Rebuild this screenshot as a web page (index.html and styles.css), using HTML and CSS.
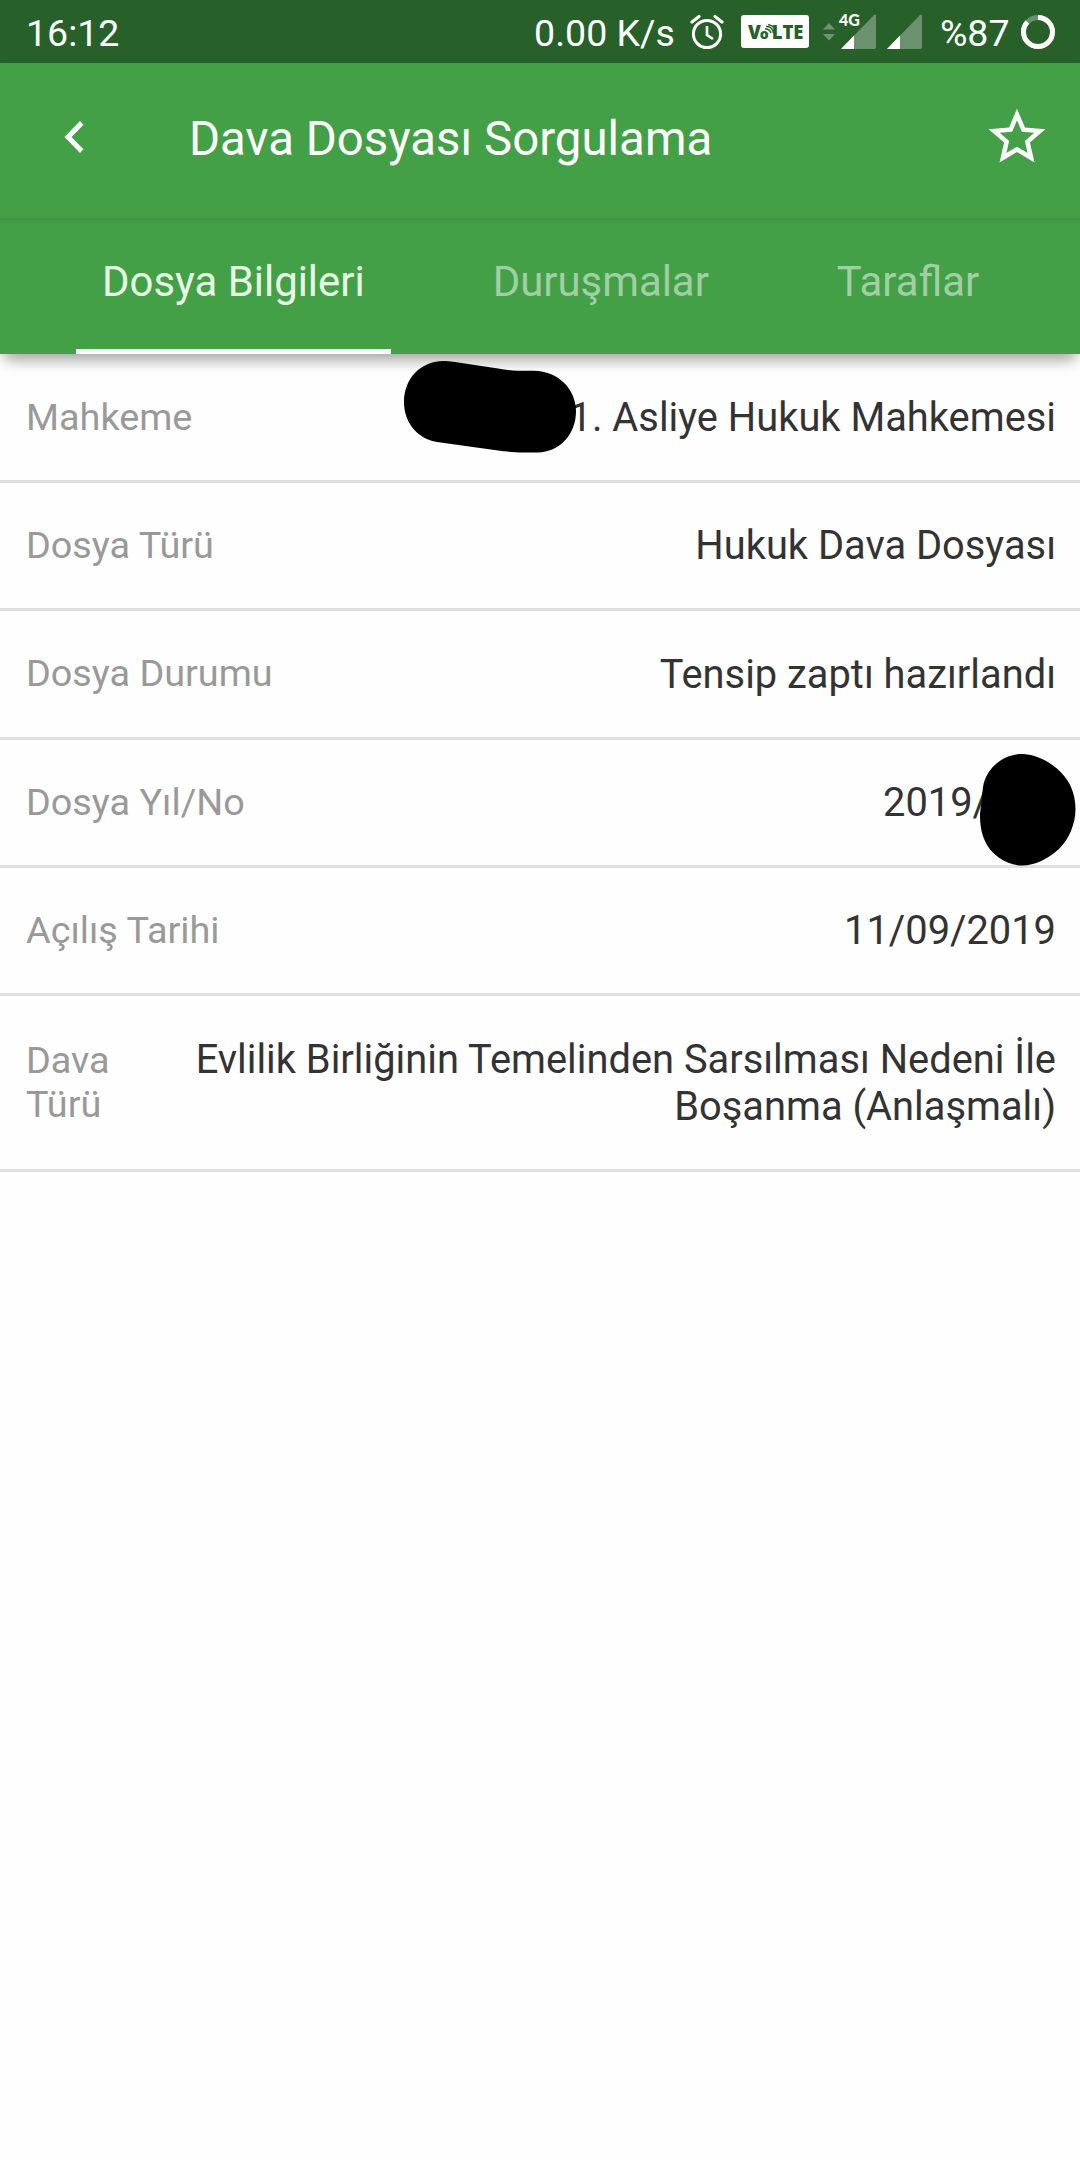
FILE: index.html
```html
<!DOCTYPE html>
<html lang="tr">
<head>
    <meta charset="UTF-8">
    <meta name="viewport" content="width=device-width, initial-scale=1.0">
    <title>Dava Dosyası Sorgulama</title>
    <link rel="stylesheet" href="styles.css">
</head>
<body>
    <div class="status-bar">
        <span class="clock">16:12</span>
        <div class="status-icons">
            <span class="speed">0.00 K/s</span>
            <svg class="alarm" width="34" height="36" viewBox="0 0 34 36" fill="none" stroke="#fff">
                <circle cx="17" cy="20" r="13.6" stroke-width="3"/>
                <path d="M17 12v9l6 4" stroke-width="2.6"/>
                <path d="M2 8l7-5.500M32 8l-7-5.500" stroke-width="3.200" stroke-linecap="round"/>
            </svg>
            <span class="volte">V<span class="volte-o">o<svg width="11" height="11" viewBox="0 0 11 11" fill="none" stroke="#28602a" stroke-width="1.500"><path d="M1 2.500Q7 2 8.500 9M3 .8Q9.500 1.500 10.300 7M0 5Q4.500 4.500 6 9"/></svg></span>LTE</span>
            <div class="signal signal-data">
                <svg width="12" height="18" viewBox="0 0 12 18" class="arrows">
                    <path d="M0 6.500L6 0l6 6.500zM0 11h12l-6 6.500z" fill="#6f9470"/>
                </svg>
                <span class="network">4G</span>
                <svg width="35" height="35" viewBox="0 0 35 35">
                    <path d="M0 35L33 1q2-1.500 2 1v31q0 2-2 2z" fill="#6b926c"/>
                    <path d="M0 35l13-13.500V35z" fill="#fff"/>
                </svg>
            </div>
            <svg class="signal-second" width="35" height="35" viewBox="0 0 35 35">
                <path d="M0 35L33 1q2-1.500 2 1v31q0 2-2 2z" fill="#6b926c"/>
                <path d="M0 35l13-13.500V35z" fill="#fff"/>
            </svg>
            <span class="battery">%87</span>
            <svg class="ring" width="34" height="34" viewBox="0 0 34 34" fill="none" stroke-width="5">
                <circle cx="17" cy="17" r="14.500" stroke="#6b926c"/>
                <circle cx="17" cy="17" r="14.500" stroke="#fff" pathLength="100" stroke-dasharray="87 13" transform="rotate(-90 17 17)"/>
            </svg>
        </div>
    </div>

    <header class="header">
        <div class="toolbar">
            <a href="#" class="back" title="Geri">
                <svg width="20" height="32" viewBox="0 0 20 32">
                    <path d="M16 0l3.500 3.800L7.500 16l12 12.200L16 32 .5 16z" fill="#fff"/>
                </svg>
            </a>
            <h1>Dava Dosyası Sorgulama</h1>
            <a href="#" class="favorite" title="Favori">
                <svg width="68" height="68" viewBox="0 0 24 24">
                    <path d="M22 9.240l-7.190-.62L12 2 9.190 8.630 2 9.240l5.460 4.730L5.820 21 12 17.270 18.180 21l-1.630-7.030L22 9.240zM12 15.400l-3.760 2.270 1-4.280-3.320-2.880 4.380-.38L12 6.100l1.710 4.040 4.380.38-3.320 2.880 1 4.280L12 15.400z" fill="#fff"/>
                </svg>
            </a>
        </div>
        <nav class="tabs">
            <a href="#" class="tab active">Dosya Bilgileri</a>
            <a href="#" class="tab">Duruşmalar</a>
            <a href="#" class="tab">Taraflar</a>
        </nav>
    </header>

    <main class="details">
        <div class="row">
            <span class="label">Mahkeme</span>
            <span class="value">
                <span class="redacted redacted-court">
                    <svg width="172" height="92" viewBox="0 0 172 92">
                        <path d="M40 0Q44 0 51 1L94 7.500Q104 9.500 114 9.700H130C154 10 172 28 172 50C172 74 155 91 134 91.500Q112 92 94 89.500L33 81C14 78 0 62 0 41C0 18 16 0 40 0z"/>
                    </svg>
                </span>1. Asliye Hukuk Mahkemesi
            </span>
        </div>
        <div class="row">
            <span class="label">Dosya Türü</span>
            <span class="value">Hukuk Dava Dosyası</span>
        </div>
        <div class="row">
            <span class="label">Dosya Durumu</span>
            <span class="value">Tensip zaptı hazırlandı</span>
        </div>
        <div class="row">
            <span class="label">Dosya Yıl/No</span>
            <span class="value">2019/<span class="redacted redacted-number">
                    <svg width="96" height="112" viewBox="0 0 96 112">
                        <path d="M42 0C57 0 75 10 85 23C92 32 95.500 43 95.500 55C95.500 70 89 85 79 95C68 105 55 111.500 42 111.500C27 111.500 11 101 5 87C1 78 0 70 0 60L3 33C6 15 22 0 42 0z"/>
                    </svg>
                </span></span>
        </div>
        <div class="row">
            <span class="label">Açılış Tarihi</span>
            <span class="value">11/09/2019</span>
        </div>
        <div class="row row-tall">
            <span class="label">Dava Türü</span>
            <span class="value">Evlilik Birliğinin Temelinden Sarsılması Nedeni İle Boşanma (Anlaşmalı)</span>
        </div>
    </main>
</body>
</html>
```
FILE: styles.css
```css
* {
    margin: 0;
    padding: 0;
    box-sizing: border-box;
}

body {
    font-family: Roboto, 'Noto Sans', sans-serif;
    background: #fefefe;
    min-height: 100vh;
}

a {
    color: inherit;
    text-decoration: none;
}

svg {
    display: block;
    flex: none;
}

.status-bar {
    height: 63px;
    padding: 0 25.5px 0 26px;
    background: #28602a;
    color: white;
    font-size: 37.5px;
    line-height: 66px;
    display: flex;
    justify-content: space-between;
}

.status-icons {
    display: flex;
    height: 63px;
    align-items: center;
    white-space: nowrap;
}

.speed {
    height: 63px;
    margin-right: 15px;
}

.volte {
    width: 68px;
    height: 33px;
    margin-left: 17px;
    padding-left: 7px;
    background: white;
    border-radius: 3px;
    color: #28602a;
    font-family: 'Open Sans', sans-serif;
    font-size: 18.5px;
    font-weight: 800;
    line-height: 34px;
    display: flex;
}

.volte-o {
    position: relative;
    margin-left: -1px;
    padding-right: 3px;
    font-size: 14px;
    line-height: 38px;
}

.volte-o svg {
    position: absolute;
    left: 5px;
    top: 9px;
}

.signal {
    position: relative;
    display: flex;
    gap: 6px;
    align-items: center;
    margin-left: 14px;
}

.network {
    position: absolute;
    left: 16px;
    top: -1px;
    font-family: Lato, sans-serif;
    font-size: 16px;
    font-weight: 900;
    line-height: 14px;
}

.signal-second {
    margin-left: 11px;
}

.battery {
    height: 63px;
    margin-left: 18px;
}

.ring {
    margin-left: 11px;
}

.header {
    background: #43a047;
    color: white;
    box-shadow: 0 10px 14px -4px rgba(0, 0, 0, 0.36);
    position: relative;
}

.toolbar {
    height: 155px;
    padding: 0 29px 7px 64px;
    display: flex;
    align-items: center;
}

.toolbar h1 {
    flex: 1;
    margin-left: 105px;
    padding-top: 3px;
    font-size: 47.4px;
    font-weight: 400;
    line-height: 56px;
}

.tabs {
    height: 136px;
    padding-left: 76px;
    display: flex;
    gap: 76px;
    background: linear-gradient(#3d9341, #43a047 6px);
}

.tab {
    padding: 0 26px;
    border-bottom: 5px solid transparent;
    color: rgba(255, 255, 255, 0.5);
    font-size: 41.9px;
    line-height: 128px;
}

.tab.active {
    color: #e8fbe4;
    border-bottom-color: white;
}

.row {
    height: 128.25px;
    padding: 0 24px 0 26px;
    border-bottom: 3px solid #dfdfdf;
    display: flex;
    align-items: center;
    justify-content: space-between;
}

.row:first-child {
    height: 129px;
}

.row-tall {
    height: 176px;
}

.label {
    padding-bottom: 1px;
    color: #999;
    font-size: 37.8px;
    line-height: 44px;
}

.value {
    padding-top: 0.5px;
    color: #333;
    font-size: 39.85px;
    line-height: 47px;
    text-align: right;
}

.row-tall .label {
    width: 110px;
}

.row-tall .value {
    flex: 1;
}

/* black marks over the hidden parts */
.redacted {
    position: relative;
    display: inline-block;
}

.redacted svg {
    position: absolute;
}

.redacted-court svg {
    right: -6px;
    bottom: -22px;
}

.redacted-number {
    width: 67px;
}

.redacted-number svg {
    left: -9px;
    bottom: -50px;
}
```
